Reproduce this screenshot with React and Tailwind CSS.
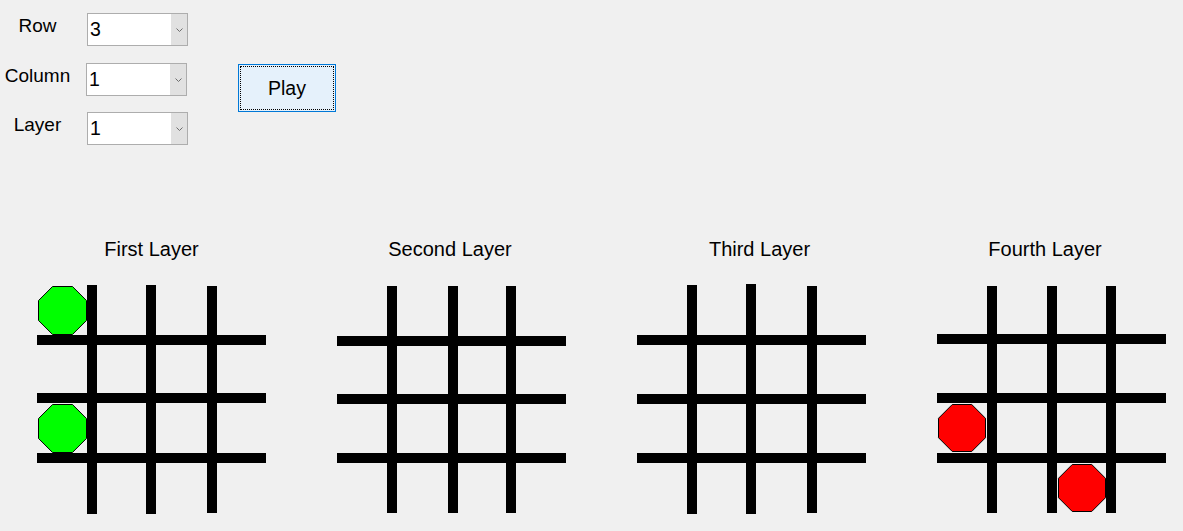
import React from "react";

// Window colours, WinForms-ish
const FORM_BG = "#f0f0f0";

const CONTROLS = [
  { label: "Row", value: "3", labelW: "w-[87px]", mt: "mt-0" },
  { label: "Column", value: "1", labelW: "w-[86px]", mt: "mt-[17px]" },
  { label: "Layer", value: "1", labelW: "w-[87px]", mt: "mt-[16px]" },
];

// Each board: title nudge + line geometry (relative to board box, top = y 283)
const BOARDS = [
  {
    title: "First Layer",
    nudge: "pl-0",
    v: [[50, 2, 231], [109, 2, 231], [170, 3, 230]],
    h: [52, 110, 170],
    pieces: [
      { x: 1, y: 3, w: 49, fill: "#00ff00" },
      { x: 1, y: 121, w: 49, fill: "#00ff00" },
    ],
  },
  {
    title: "Second Layer",
    nudge: "pr-[3px]",
    v: [[50, 3, 230], [111, 3, 230], [169, 3, 230]],
    h: [53, 111, 170],
    pieces: [],
  },
  {
    title: "Third Layer",
    nudge: "pl-[16px]",
    v: [[50, 2, 231], [109, 1, 231], [170, 3, 230]],
    h: [52, 111, 170],
    pieces: [],
  },
  {
    title: "Fourth Layer",
    nudge: "pr-[13px]",
    v: [[50, 3, 230], [110, 3, 230], [169, 3, 230]],
    h: [51, 110, 170],
    pieces: [
      { x: 1, y: 121, w: 48, fill: "#ff0000" },
      { x: 121, y: 181, w: 48, fill: "#ff0000" },
    ],
  },
];

const octagon = (x, y, w) => {
  const c = w / (2 + Math.SQRT2);
  return [
    [x + c, y], [x + w - c, y], [x + w, y + c], [x + w, y + w - c],
    [x + w - c, y + w], [x + c, y + w], [x, y + w - c], [x, y + c],
  ].map((p) => p.join(",")).join(" ");
};

function Combo({ value }) {
  return (
    <div className="flex h-[33px] w-[101px] border border-[#adadad] bg-white">
      <div className="flex flex-1 items-center pl-[2px] pt-px text-[19.5px] leading-none text-black">{value}</div>
      <div className="flex w-[16px] items-center justify-center bg-[#e1e1e1]">
        <svg width="7" height="4" viewBox="0 0 7 4">
          <polyline points="0.5,0.5 3.5,3.5 6.5,0.5" fill="none" stroke="#6d6d6d" strokeWidth="1" />
        </svg>
      </div>
    </div>
  );
}

function Board({ b }) {
  return (
    <div className="flex w-[229px] flex-col">
      <div className={`h-[22px] pt-px text-center text-[20px] leading-[22px] text-black ${b.nudge}`}>{b.title}</div>
      <svg className="mt-[24px]" width="229" height="232" viewBox="0 0 229 232">
        {b.v.map(([x, y1, y2], i) => (
          <rect key={"v" + i} x={x} y={y1} width="10" height={y2 - y1} fill="#000" />
        ))}
        {b.h.map((y, i) => (
          <rect key={"h" + i} x="0" y={y} width="229" height="10" fill="#000" />
        ))}
        {b.pieces.map((p, i) => (
          <polygon key={"p" + i} points={octagon(p.x + 0.5, p.y + 0.5, p.w - 1)} fill={p.fill} stroke="#000" strokeWidth="1" />
        ))}
      </svg>
    </div>
  );
}

export default function App() {
  return (
    <div
      className="h-[531px] w-[1183px] overflow-hidden bg-[#f0f0f0]"
      style={{ fontFamily: '"Liberation Sans", Arial, sans-serif', background: FORM_BG }}
    >
      {/* top controls */}
      <div className="flex pt-[13px]">
        <div className="flex flex-col">
          {CONTROLS.map((c) => (
            <div key={c.label} className={`flex items-start ${c.mt}`}>
              <div className={`${c.labelW} pt-[2px]`}>
                <div className="w-[75px] text-center text-[19px] leading-[22px] text-black">{c.label}</div>
              </div>
              <Combo value={c.value} />
            </div>
          ))}
        </div>
        <div className="ml-[50px] mt-[51px]">
          <button className="flex h-[48px] w-[98px] border border-[#0078d7] bg-[#e5f1fb] p-px">
            <span className="flex flex-1 items-center justify-center border border-dotted border-black pt-[2px] text-[19.5px] leading-none text-black">
              Play
            </span>
          </button>
        </div>
      </div>

      {/* boards */}
      <div className="mt-[92px] flex gap-[71px] pl-[37px]">
        {BOARDS.map((b) => (
          <Board key={b.title} b={b} />
        ))}
      </div>
    </div>
  );
}
